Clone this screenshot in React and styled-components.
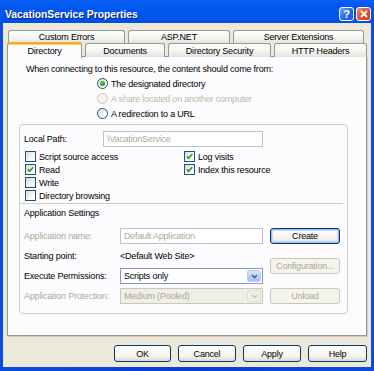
import React from 'react';
import styled, { createGlobalStyle, css } from 'styled-components';

const GlobalStyle = createGlobalStyle`
  html, body { margin: 0; padding: 0; background: #ffffff; }
  body {
    font-family: "Liberation Sans", Arial, sans-serif;
    font-size: 9px;
    letter-spacing: -0.2px;
    color: #000;
  }
`;

const Frame = styled.div`
  width: 374px;
  height: 371px;
  box-sizing: border-box;
  display: flex;
  flex-direction: column;
  background: linear-gradient(to right, #0B4BE0, #0A3FD6 50%, #0B4BE0);
  padding: 0 3px 4px 3px;
`;

const TitleBar = styled.div`
  height: 23px;
  box-sizing: border-box;
  margin: 0 -3px;
  padding: 5px 3px 0 5px;
  display: flex;
  align-items: center;
  background: linear-gradient(to bottom, #0A5EF2 0%, #0058EE 30%, #0054E8 70%, #0050E0 100%);
`;

const Title = styled.div`
  flex: 1;
  color: #fff;
  font-weight: bold;
  font-size: 10.3px;
  letter-spacing: 0;
  text-shadow: 1px 1px 0 #0A1E80;
`;

const CaptionButton = styled.div`
  width: 15px;
  height: 14px;
  box-sizing: border-box;
  margin-left: 2px;
  border: 1px solid #fff;
  border-radius: 3px;
  display: flex;
  align-items: center;
  justify-content: center;
  color: #fff;
  font-weight: bold;
  font-size: 11px;
  background: ${p => p.close
    ? 'linear-gradient(135deg, #F29072, #E0542D 50%, #C8401C)'
    : 'linear-gradient(135deg, #7AA6F8, #2E6BEA 50%, #1B55D8)'};
`;

const Body = styled.div`
  flex: 1;
  background: #ECE9D8;
  padding: 7px 4px 0 4px;
  display: flex;
  flex-direction: column;
`;

const TabRow = styled.div`
  display: flex;
  gap: 3px;
  height: ${p => (p.front ? 14 : 13)}px;
  margin-left: ${p => (p.front ? 0 : 1)}px;
  position: relative;
  z-index: ${p => (p.front ? 2 : 0)};
`;

const Tab = styled.div`
  width: ${p => p.w}px;
  box-sizing: border-box;
  border: 1px solid #919B9C;
  border-bottom: none;
  border-radius: 3px 3px 0 0;
  background: linear-gradient(to bottom, #FFFFFF, #F3F3EF 60%, #E4E3DC);
  display: flex;
  align-items: center;
  justify-content: center;
  ${p => p.active && css`
    background: #FCFCFE;
    height: 16px;
    margin-top: -1px;
    border-top: 2px solid #F6A832;
    box-shadow: inset 0 1px 0 #FFD25A;
  `}
`;

const Panel = styled.div`
  height: 280px;
  box-sizing: border-box;
  margin-top: -1px;
  border: 1px solid #919B9C;
  background: #FCFCFE;
  box-shadow: 1px 1px 0 #D0CEBF;
  padding: 5px 18px 0 11px;
  display: flex;
  flex-direction: column;
`;

const Intro = styled.div`
  height: 14px;
  display: flex;
  align-items: center;
  margin-left: 7px;
`;

const RadioList = styled.div`
  margin-left: 78px;
  display: flex;
  flex-direction: column;
`;

const OptionRow = styled.div`
  height: ${p => p.h || 15}px;
  display: flex;
  align-items: center;
  gap: 3px;
  color: ${p => (p.disabled ? '#BDBAA8' : '#000')};
`;

const RadioCircle = styled.span`
  width: 11px;
  height: 11px;
  box-sizing: border-box;
  border-radius: 50%;
  border: 1px solid ${p => (p.disabled ? '#CAC8BB' : '#1C5180')};
  background: ${p => (p.disabled ? '#F5F4EA' : 'linear-gradient(135deg, #DCDBD3, #FFFFFF 80%)')};
  display: flex;
  align-items: center;
  justify-content: center;
  &::after {
    content: '';
    display: ${p => (p.checked ? 'block' : 'none')};
    width: 5px;
    height: 5px;
    border-radius: 50%;
    background: radial-gradient(circle at 35% 35%, #55D051, #21A121 60%, #1A8C1A);
  }
`;

const CheckBoxBox = styled.span`
  width: 11px;
  height: 11px;
  box-sizing: border-box;
  border: 1px solid #1C5180;
  background: linear-gradient(135deg, #DCDBD3, #FFFFFF 80%);
  display: flex;
  align-items: center;
  justify-content: center;
  flex-shrink: 0;
`;

const GroupBox = styled.div`
  margin-top: 3px;
  border: 1px solid #D0D0BF;
  border-radius: 4px;
  padding: 6px 7px 9px 4px;
  display: flex;
  flex-direction: column;
`;

const FieldRow = styled.div`
  display: flex;
  align-items: center;
  height: 16px;
`;

const Label = styled.div`
  width: ${p => p.w}px;
  flex-shrink: 0;
  color: ${p => (p.disabled ? '#ACA899' : '#000')};
`;

const TextBox = styled.div`
  width: ${p => p.w}px;
  height: 16px;
  box-sizing: border-box;
  border: 1px solid ${p => (p.disabled ? '#B9C3CF' : '#7F9DB9')};
  background: #fff;
  color: ${p => (p.disabled ? '#ACA899' : '#000')};
  padding-left: 3px;
  display: flex;
  align-items: center;
`;

const CheckGrid = styled.div`
  margin-top: 3px;
  margin-left: 1px;
  display: grid;
  grid-template-columns: 159px 1fr;
  grid-auto-flow: column;
  grid-template-rows: repeat(4, 13px);
`;

const Separator = styled.div`
  height: 0;
  margin: 1px -3px 0 -4px;
  border-top: 1px solid #D0D0BF;
`;

const SectionTitle = styled.div`
  height: 14px;
  margin-top: 2px;
  display: flex;
  align-items: center;
`;

const Settings = styled.div`
  margin-top: 8px;
  display: flex;
  gap: 7px;
`;

const SettingsGrid = styled.div`
  display: grid;
  grid-template-columns: 96px 143px;
  grid-template-rows: repeat(4, 16px);
  row-gap: 4px;
  align-items: center;
`;

const ButtonColumn = styled.div`
  display: flex;
  flex-direction: column;
  gap: 14px;
`;

const Select = styled.div`
  height: 16px;
  box-sizing: border-box;
  border: 1px solid ${p => (p.disabled ? '#C9C7BA' : '#7F9DB9')};
  background: ${p => (p.disabled ? '#F0EFE6' : '#fff')};
  color: ${p => (p.disabled ? '#ACA899' : '#000')};
  display: flex;
  align-items: center;
  padding: 0 1px 0 3px;
`;

const SelectText = styled.span`
  flex: 1;
`;

const DropButton = styled.span`
  width: 14px;
  height: 12px;
  box-sizing: border-box;
  border-radius: 2px;
  display: flex;
  align-items: center;
  justify-content: center;
  ${p => p.disabled
    ? css`background: #EFEEE6; border: 1px solid #E2E0D5;`
    : css`background: linear-gradient(to bottom, #DCE7FD, #B6CCF9 60%, #A9C1F7); border: 1px solid #B9CDF7;`}
`;

const Button = styled.div`
  width: ${p => p.w || 70}px;
  height: ${p => p.h || 16}px;
  box-sizing: border-box;
  border-radius: 3px;
  display: flex;
  align-items: center;
  justify-content: center;
  ${p => p.disabled
    ? css`
      border: 1px solid #C9C7BA;
      background: #F5F4EA;
      color: #ACA899;
    `
    : css`
      border: 1px solid #003C74;
      background: linear-gradient(to bottom, #FFFFFF, #F4F3EE 70%, #DCD8CC);
      color: #000;
    `}
  ${p => p.isDefault && css`
    box-shadow: inset 0 0 0 1px #9AB6EC, inset 0 0 0 2px #CEDCF6;
  `}
`;

const Footer = styled.div`
  display: flex;
  justify-content: flex-end;
  gap: 7px;
  padding: 9px 0 0 0;
`;

const Check = () => (
  <svg width="7" height="7" viewBox="0 0 7 7">
    <path d="M0.8 3.4 L2.6 5.3 L6.2 1.2" fill="none" stroke="#21A121" strokeWidth="1.6" />
  </svg>
);

const Chevron = ({ color }) => (
  <svg width="7" height="5" viewBox="0 0 7 5">
    <path d="M1 1 L3.5 3.5 L6 1" fill="none" stroke={color} strokeWidth="1.6" />
  </svg>
);

const Radio = ({ label, checked, disabled }) => (
  <OptionRow disabled={disabled}>
    <RadioCircle checked={checked} disabled={disabled} />
    <span>{label}</span>
  </OptionRow>
);

const CheckBox = ({ label, checked }) => (
  <OptionRow h={13}>
    <CheckBoxBox>{checked && <Check />}</CheckBoxBox>
    <span>{label}</span>
  </OptionRow>
);

const backTabs = [
  { label: 'Custom Errors', w: 117 },
  { label: 'ASP.NET', w: 102 },
  { label: 'Server Extensions', w: 131 },
];

const frontTabs = [
  { label: 'Directory', w: 75, active: true },
  { label: 'Documents', w: 80 },
  { label: 'Directory Security', w: 103 },
  { label: 'HTTP Headers', w: 93 },
];

export default function App() {
  return (
    <>
      <GlobalStyle />
      <Frame>
        <TitleBar>
          <Title>VacationService Properties</Title>
          <CaptionButton>?</CaptionButton>
          <CaptionButton close>
            <svg width="8" height="8" viewBox="0 0 8 8">
              <path d="M1 1 L7 7 M7 1 L1 7" stroke="#fff" strokeWidth="1.8" />
            </svg>
          </CaptionButton>
        </TitleBar>
        <Body>
          <TabRow>
            {backTabs.map(t => <Tab key={t.label} w={t.w}>{t.label}</Tab>)}
          </TabRow>
          <TabRow front>
            {frontTabs.map(t => <Tab key={t.label} w={t.w} active={t.active}>{t.label}</Tab>)}
          </TabRow>
          <Panel>
            <Intro>When connecting to this resource, the content should come from:</Intro>
            <RadioList>
              <Radio label="The designated directory" checked />
              <Radio label="A share located on another computer" disabled />
              <Radio label="A redirection to a URL" />
            </RadioList>
            <GroupBox>
              <FieldRow>
                <Label w={79}>Local Path:</Label>
                <TextBox w={160} disabled>\VacationService</TextBox>
              </FieldRow>
              <CheckGrid>
                <CheckBox label="Script source access" />
                <CheckBox label="Read" checked />
                <CheckBox label="Write" />
                <CheckBox label="Directory browsing" />
                <CheckBox label="Log visits" checked />
                <CheckBox label="Index this resource" checked />
              </CheckGrid>
              <Separator />
              <SectionTitle>Application Settings</SectionTitle>
              <Settings>
                <SettingsGrid>
                  <Label disabled>Application name:</Label>
                  <TextBox w={143} disabled>Default Application</TextBox>
                  <Label>Starting point:</Label>
                  <div>&lt;Default Web Site&gt;</div>
                  <Label>Execute Permissions:</Label>
                  <Select>
                    <SelectText>Scripts only</SelectText>
                    <DropButton><Chevron color="#4D6185" /></DropButton>
                  </Select>
                  <Label disabled>Application Protection:</Label>
                  <Select disabled>
                    <SelectText>Medium (Pooled)</SelectText>
                    <DropButton disabled><Chevron color="#C9C7BA" /></DropButton>
                  </Select>
                </SettingsGrid>
                <ButtonColumn>
                  <Button isDefault>Create</Button>
                  <Button disabled>Configuration...</Button>
                  <Button disabled>Unload</Button>
                </ButtonColumn>
              </Settings>
            </GroupBox>
          </Panel>
          <Footer>
            <Button w={57} h={17}>OK</Button>
            <Button w={58} h={17}>Cancel</Button>
            <Button w={58} h={17}>Apply</Button>
            <Button w={59} h={17}>Help</Button>
          </Footer>
        </Body>
      </Frame>
    </>
  );
}
